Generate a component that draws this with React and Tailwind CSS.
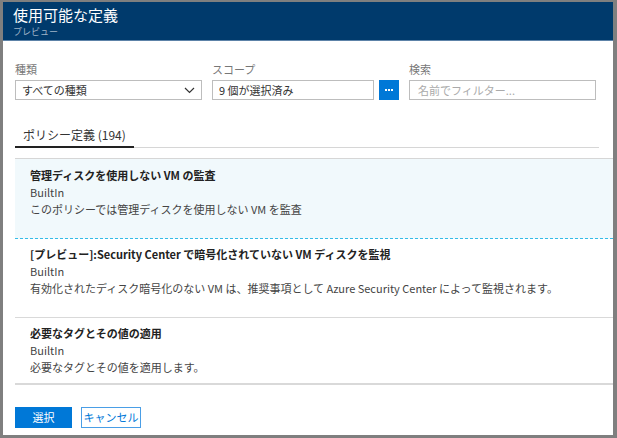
import React from 'react';

const policies = [
  {
    title: '管理ディスクを使用しない VM の監査',
    type: 'BuiltIn',
    desc: 'このポリシーでは管理ディスクを使用しない VM を監査',
    selected: true,
  },
  {
    title: '[プレビュー]:Security Center で暗号化されていない VM ディスクを監視',
    type: 'BuiltIn',
    desc: '有効化されたディスク暗号化のない VM は、推奨事項として Azure Security Center によって監視されます。',
  },
  {
    title: '必要なタグとその値の適用',
    type: 'BuiltIn',
    desc: '必要なタグとその値を適用します。',
  },
];

const font = { fontFamily: '"Segoe UI", "Noto Sans CJK JP", "Noto Sans", sans-serif' };

const App = () => {
  return (
    <div
      style={font}
      className="w-[617px] h-[438px] bg-white border-t-2 border-l-[3px] border-r-[4px] border-b-[3px] border-[#7f7f7f] flex flex-col overflow-hidden"
    >
      {/* header */}
      <div className="h-[39px] bg-[#003a6c] border-b border-[#5d83a8] pl-[10px] pt-[3px] shrink-0">
        <div className="text-white text-[15px] leading-[20px]">使用可能な定義</div>
        <div className="text-[#9fb3c8] text-[9px] leading-[12px] mt-[1px]">プレビュー</div>
      </div>

      {/* filters */}
      <div className="flex pl-[12px] pt-[21px] gap-[10px] shrink-0">
        <div className="w-[187px]">
          <div className="text-[11px] text-[#777] leading-[14px] mb-[4px]">種類</div>
          <div className="h-[20px] border border-[#bdbdbd] flex items-center justify-between pl-[6px] pr-[6px]">
            <span className="text-[11px] text-[#333] leading-[14px]">すべての種類</span>
            <svg width="11" height="7" viewBox="0 0 11 7" fill="none" stroke="#333" strokeWidth="1.2">
              <path d="M1 1l4.5 4.5L10 1" />
            </svg>
          </div>
        </div>
        <div className="w-[162px]">
          <div className="text-[11px] text-[#777] leading-[14px] mb-[4px]">スコープ</div>
          <div className="h-[20px] border border-[#bdbdbd] flex items-center pl-[6px]">
            <span className="text-[11px] text-[#333] leading-[14px]">9 個が選択済み</span>
          </div>
        </div>
        <div className="pt-[18px] -ml-[5px]">
          <div className="w-[20px] h-[20px] bg-[#0078d7] flex items-center justify-center gap-[1px]">
            <div className="w-[2px] h-[2px] bg-white"></div>
            <div className="w-[2px] h-[2px] bg-white"></div>
            <div className="w-[2px] h-[2px] bg-white"></div>
          </div>
        </div>
        <div className="w-[187px]">
          <div className="text-[11px] text-[#777] leading-[14px] mb-[4px]">検索</div>
          <div className="h-[20px] border border-[#bdbdbd] flex items-center pl-[8px]">
            <span className="text-[11px] text-[#aaa] leading-[14px]">名前でフィルター...</span>
          </div>
        </div>
      </div>

      {/* tabs */}
      <div className="mt-[27px] ml-[12px] mr-[14px] border-b border-[#d6d6d6] flex shrink-0">
        <div className="border-b-2 border-[#222] -mb-px px-[8px] pb-[3px] whitespace-nowrap text-[12px] text-[#333] leading-[16px]">
          ポリシー定義 (194)
        </div>
      </div>

      {/* list */}
      <div className="mt-[10px] ml-[12px] border-t border-[#d6d6d6] shrink-0">
        {policies.map((p, i) => (
          <div
            key={i}
            className={
              p.selected
                ? 'h-[80px] bg-[#f1f9fc] border-b border-dashed border-[#33bce8] pl-[15px] pt-[8px]'
                : i === policies.length - 1
                ? 'h-[67px] border-b-2 border-[#d9d9d9] pl-[15px] pt-[7px]'
                : 'h-[79px] border-b border-[#d9d9d9] pl-[15px] pt-[7px]'
            }
          >
            <div className="text-[11px] font-semibold text-[#222] leading-[17px] whitespace-nowrap">{p.title}</div>
            <div className="text-[11px] text-[#444] leading-[17px]">{p.type}</div>
            <div className="text-[11px] text-[#444] leading-[17px] whitespace-nowrap">{p.desc}</div>
          </div>
        ))}
      </div>

      {/* footer */}
      <div className="flex gap-[9px] pl-[12px] mt-[22px] shrink-0">
        <button className="w-[57px] h-[21px] bg-[#0078d7] text-white text-[11px]">選択</button>
        <button className="w-[60px] h-[21px] border border-[#4a9ee6] text-[#0078d7] text-[11px]">キャンセル</button>
      </div>
    </div>
  );
};

export default App;
